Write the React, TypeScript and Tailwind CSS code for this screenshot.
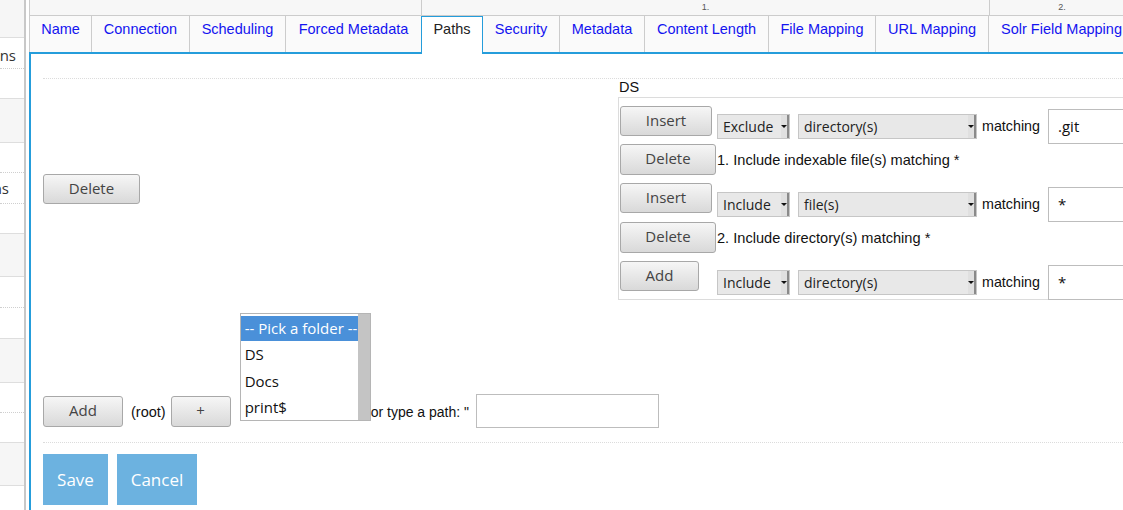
import React from "react";

const tabs = [
  { label: "Name", cls: "w-[63px] border-l border-r" },
  { label: "Connection", cls: "w-[98px] border-r" },
  { label: "Scheduling", cls: "w-[96px] border-r" },
  { label: "Forced Metadata", cls: "w-[135px]" },
  { label: "Paths", cls: "w-[62px]", active: true },
  { label: "Security", cls: "w-[77px] border-r" },
  { label: "Metadata", cls: "w-[85px] border-r" },
  { label: "Content Length", cls: "w-[124px] border-r" },
  { label: "File Mapping", cls: "w-[107px] border-r" },
  { label: "URL Mapping", cls: "w-[113px] border-r" },
  { label: "Solr Field Mapping", cls: "w-[146px] border-r" },
];

function Btn({ label, className = "" }: { label: string; className?: string }) {
  return (
    <button
      className={`flex shrink-0 items-center justify-center rounded-[3px] border border-[#a8a8a8] bg-linear-to-b from-[#f6f6f6] to-[#d9d9d9] pb-[2px] font-['Open_Sans',sans-serif] text-[15px] text-[#444] ${className}`}
    >
      {label}
    </button>
  );
}

function Sel({ value, className = "" }: { value: string; className?: string }) {
  return (
    <div
      className={`flex h-[25px] shrink-0 items-center border border-[#c6c6c6] bg-[#e8e8e8] font-['Open_Sans',sans-serif] text-[14px] text-[#222] ${className}`}
    >
      <span className="flex-1 pl-[5px] pb-[1px]">{value}</span>
      <span className="flex h-full w-[8px] items-center justify-center border-r-2 border-[#8a8a8a] bg-[#e0e0e0]">
        <span className="h-0 w-0 border-x-[3px] border-t-[3px] border-x-transparent border-t-[#111]" />
      </span>
    </div>
  );
}

function Field({ value, className = "" }: { value: string; className?: string }) {
  return (
    <div
      className={`flex w-[200px] shrink-0 items-center border border-[#bdbdbd] bg-white pl-[9px] font-['Open_Sans',sans-serif] text-[15px] text-[#111] ${className}`}
    >
      {value}
    </div>
  );
}

function RuleRow({
  btn,
  btnW,
  mode,
  what,
  value,
  h,
  bt,
  st,
  it,
}: {
  btn: string;
  btnW: string;
  mode: string;
  what: string;
  value: string;
  h: string;
  bt: string;
  st: string;
  it: string;
}) {
  return (
    <div className={`flex items-start ${h}`}>
      <div className="w-[97px] shrink-0">
        <Btn label={btn} className={`h-[30px] ${btnW} ${bt}`} />
      </div>
      <div className={`flex items-center ${st}`}>
        <Sel value={mode} className="w-[73px]" />
        <Sel value={what} className="ml-[8px] w-[179px]" />
        <span className="ml-[5px] font-['Liberation_Sans',Arial,sans-serif] text-[14.3px] text-[#111]">matching</span>
      </div>
      <Field value={value} className={`ml-[8px] h-[35px] ${it}`} />
    </div>
  );
}

function TextRow({ text, h, tt }: { text: string; h: string; tt: string }) {
  return (
    <div className={`flex items-start ${h}`}>
      <Btn label="Delete" className="h-[31px] w-[96px]" />
      <span className={`ml-[1px] font-['Liberation_Sans',Arial,sans-serif] text-[14.6px] leading-[16px] text-[#111] ${tt}`}>
        {text}
      </span>
    </div>
  );
}

function Sidebar() {
  const gray = "bg-[#f6f6f6] border-b border-[#dedede]";
  const label = "flex justify-end overflow-hidden whitespace-nowrap font-['Open_Sans',sans-serif] text-[15px] text-[#333]";
  return (
    <div className="flex w-[26px] shrink-0 flex-col border-r-2 border-[#c8c8c8]">
      <div className={`h-[38px] ${gray}`} />
      <div className="flex h-[61px] flex-col border-b border-[#dedede]">
        <div className={`h-[31px] items-center border-b border-dotted border-[#cfcfcf] pr-[8px] pt-[4px] ${label}`}>Connections</div>
      </div>
      <div className={`h-[44px] ${gray}`} />
      <div className="flex h-[91px] flex-col border-b border-[#dedede]">
        <div className="h-[30px] border-b border-dotted border-[#cfcfcf]" />
        <div className={`h-[31px] items-center border-b border-dotted border-[#cfcfcf] pr-[15px] ${label}`}>Connections</div>
      </div>
      <div className={`h-[43px] ${gray}`} />
      <div className="flex h-[62px] flex-col border-b border-[#dedede]">
        <div className="h-[31px] border-b border-dotted border-[#cfcfcf]" />
      </div>
      <div className={`h-[44px] ${gray}`} />
      <div className="flex h-[60px] flex-col border-b border-[#dedede]">
        <div className="h-[30px] border-b border-dotted border-[#cfcfcf]" />
      </div>
      <div className={`h-[43px] ${gray}`} />
      <div className="flex-1" />
    </div>
  );
}

export default function App() {
  return (
    <div className="flex h-[510px] w-[1123px] overflow-hidden bg-white font-['Liberation_Sans',Arial,sans-serif]">
      <Sidebar />
      <div className="ml-[3px] flex w-[1200px] shrink-0 flex-col">
        {/* step header */}
        <div className="flex h-[16px] border-b border-[#cccccc] bg-[#f7f7f7] text-[9px] leading-[15px] text-[#555]">
          <div className="w-[392px] border-l border-[#cccccc]" />
          <div className="w-[568px] border-l border-[#cccccc] text-center">1.</div>
          <div className="w-[146px] border-x border-[#cccccc] text-center">2.</div>
        </div>
        {/* tabs */}
        <div className="flex h-[36px] items-start">
          {tabs.map((t) =>
            t.active ? (
              <div
                key={t.label}
                className={`relative z-10 h-[38px] shrink-0 border-x border-t border-[#259ddb] bg-white pt-[2px] text-center text-[14.5px] text-[#222] ${t.cls}`}
              >
                {t.label}
              </div>
            ) : (
              <div
                key={t.label}
                className={`h-[36px] shrink-0 border-[#cccccc] bg-[#fafafa] pt-[3px] text-center text-[14.5px] text-[#1414f0] ${t.cls}`}
              >
                {t.label}
              </div>
            )
          )}
        </div>
        {/* panel */}
        <div className="flex-1 border-l-2 border-t-2 border-[#259ddb] pl-[12px] pt-[24px]">
          <div className="flex h-[223px] border-t border-dotted border-[#dcdcdc]">
            <div className="flex w-[575px] shrink-0 items-center">
              <Btn label="Delete" className="mb-[2px] h-[30px] w-[97px]" />
            </div>
            <div className="flex flex-col">
              <div className="h-[16px] pl-[1px] text-[14.5px] leading-[16px] text-[#111]">DS</div>
              <div className="mt-[2px] flex w-[520px] flex-col border border-[#dcdcdc] pl-[1px]">
                <RuleRow btn="Insert" btnW="w-[92px]" mode="Exclude" what="directory(s)" value=".git" h="h-[46px]" bt="mt-[8px]" st="mt-[16px]" it="mt-[11px]" />
                <TextRow text="1. Include indexable file(s) matching *" h="h-[34px]" tt="mt-[8px]" />
                <RuleRow btn="Insert" btnW="w-[92px]" mode="Include" what="file(s)" value="*" h="h-[44px]" bt="mt-[5px]" st="mt-[14px]" it="mt-[9px]" />
                <TextRow text="2. Include directory(s) matching *" h="h-[35px]" tt="mt-[8px]" />
                <RuleRow btn="Add" btnW="w-[79px]" mode="Include" what="directory(s)" value="*" h="h-[42px]" bt="mt-[4px]" st="mt-[13px]" it="mt-[8px]" />
              </div>
            </div>
          </div>
          {/* add path row */}
          <div className="flex h-[141px] items-end">
            <Btn label="Add" className="mb-[15px] h-[31px] w-[80px]" />
            <span className="mb-[22px] ml-[8px] text-[14.5px] leading-[16px] text-[#111]">(root)</span>
            <Btn label="+" className="mb-[15px] ml-[5px] h-[31px] w-[60px]" />
            <div className="mb-[21px] ml-[9px] flex h-[108px] w-[131px] border border-[#b5b5b5] bg-white font-['Open_Sans',sans-serif] text-[15px] text-[#111]">
              <div className="flex flex-1 flex-col pt-[2px]">
                <div className="flex h-[25px] items-center whitespace-nowrap bg-[#4a90d9] pl-[4px] text-white">-- Pick a folder --</div>
                <div className="flex h-[27px] items-center pl-[4px]">DS</div>
                <div className="flex h-[26px] items-center pl-[4px]">Docs</div>
                <div className="flex h-[26px] items-center pl-[4px]">print$</div>
              </div>
              <div className="w-[12px] bg-[#c4c4c4]" />
            </div>
            <span className="mb-[22px] whitespace-nowrap text-[14px] leading-[16px] text-[#111]">or type a path: "</span>
            <div className="mb-[14px] ml-[7px] h-[34px] w-[183px] border border-[#bdbdbd] bg-white" />
          </div>
          {/* save row */}
          <div className="flex gap-[9px] border-t border-dotted border-[#dcdcdc] pt-[11px]">
            <button className="flex h-[51px] w-[65px] items-center justify-center bg-[#6cb2e0] font-['Open_Sans',sans-serif] text-[17px] text-white">
              Save
            </button>
            <button className="flex h-[51px] w-[80px] items-center justify-center bg-[#6cb2e0] font-['Open_Sans',sans-serif] text-[17px] text-white">
              Cancel
            </button>
          </div>
        </div>
      </div>
    </div>
  );
}
